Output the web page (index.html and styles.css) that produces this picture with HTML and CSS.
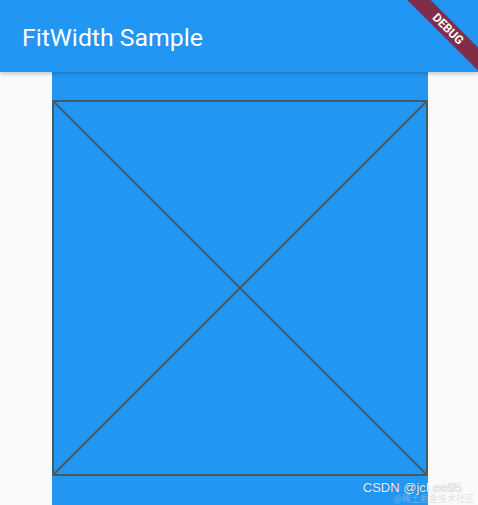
FILE: index.html
```html
<!DOCTYPE html>
<html>
<head>
<meta charset="utf-8">
<link rel="stylesheet" href="styles.css">
</head>
<body>
<div class="screen">
  <header class="appbar">
    <h1 class="title">FitWidth Sample</h1>
  </header>
  <main class="content">
    <div class="column">
      <svg class="placeholder" width="376" height="376" viewBox="0 0 376 376">
        <rect x="1" y="1" width="374" height="374" fill="none" stroke="#455A64" stroke-width="2"/>
        <line x1="1" y1="1" x2="375" y2="375" stroke="#455A64" stroke-width="2"/>
        <line x1="375" y1="1" x2="1" y2="375" stroke="#455A64" stroke-width="2"/>
      </svg>
    </div>
  </main>
  <div class="banner"><span>DEBUG</span></div>
  <div class="watermark">
    <div class="wm-main">CSDN @jcLee95</div>
    <div class="wm-sub">@稀土掘金技术社区</div>
  </div>
</div>
</body>
</html>
```
FILE: styles.css
```css
html, body {
  margin: 0;
  padding: 0;
}
body {
  background: #fafafa;
  font-family: Roboto, "Noto Sans", sans-serif;
}
.screen {
  position: relative;
  width: 478px;
  height: 505px;
  overflow: hidden;
  background: #fafafa;
}
.appbar {
  position: relative;
  z-index: 2;
  height: 72px;
  background: #2196f3;
  display: flex;
  align-items: center;
  padding-left: 22px;
  box-shadow: 0 2px 4px rgba(0,0,0,0.2);
}
.title {
  margin: 0;
  font-size: 24.8px;
  font-weight: 400;
  color: #ffffff;
  letter-spacing: 0;
  position: relative;
  top: 1px;
}
.content {
  display: flex;
  justify-content: center;
  height: 433px;
}
.column {
  width: 376px;
  height: 433px;
  margin-left: 2px;
  background: #2196f3;
  padding-top: 28px;
  box-sizing: border-box;
}
.placeholder {
  display: block;
}
.banner {
  position: absolute;
  z-index: 3;
  left: 368px;
  top: 21px;
  width: 160px;
  height: 16px;
  background: #7f2d48;
  transform: rotate(45deg);
  display: flex;
  align-items: center;
  justify-content: center;
  box-shadow: 0 0 2px rgba(0,0,0,0.25);
}
.banner span {
  color: #ffffff;
  font-family: Roboto, "Noto Sans", sans-serif;
  font-weight: 700;
  font-size: 12px;
  letter-spacing: 0;
}
.watermark {
  position: absolute;
  z-index: 4;
  right: 16px;
  bottom: 1px;
  text-align: right;
}
.wm-main {
  font-family: "Liberation Sans", Arial, sans-serif;
  font-size: 13px;
  line-height: 13px;
  color: #f0f0f0;
  text-shadow: 0 0 1px rgba(0,0,0,0.35);
}
.wm-sub {
  font-family: "Noto Sans CJK SC", sans-serif;
  font-size: 9px;
  line-height: 10px;
  color: rgba(200,200,200,0.55);
  margin-top: 0;
  margin-right: -12px;
}
```
